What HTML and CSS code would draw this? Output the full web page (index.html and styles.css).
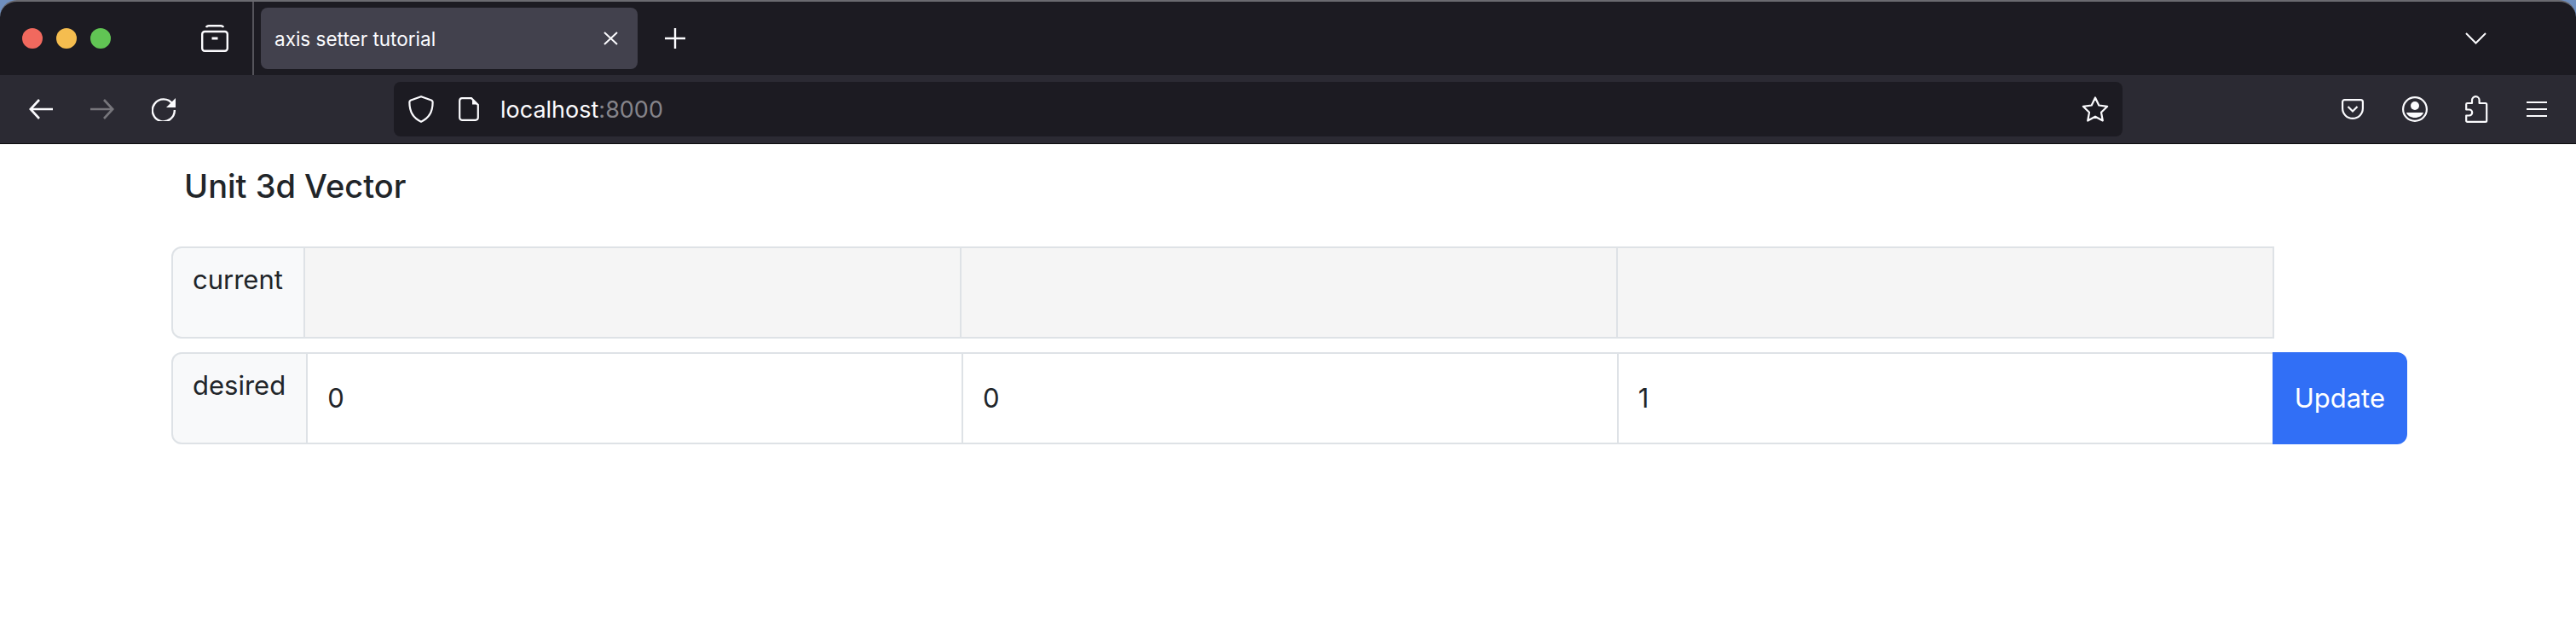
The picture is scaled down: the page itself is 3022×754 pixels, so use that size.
FILE: index.html
```html
<!DOCTYPE html>
<html lang="en">
<head>
    <meta charset="UTF-8">
    <meta name="viewport" content="width=device-width, initial-scale=1.0">
    <title>axis setter tutorial</title>
    <link rel="stylesheet" href="styles.css">
</head>
<body>
    <header class="chrome">
        <div class="titlebar">
            <div class="lights">
                <span class="light red"></span>
                <span class="light yellow"></span>
                <span class="light green"></span>
            </div>
            <svg class="view-icon" width="32" height="32" viewBox="0 0 32 32" fill="none" stroke="#fbfbfe" stroke-width="2.4">
                <path d="M6 3.2C6.5 1.8 7.5 1.3 9 1.3h14c1.500 0 2.500.5 3 1.900"/>
                <rect x="1.200" y="8" width="29.600" height="22.800" rx="3"/>
                <path d="M12.500 16h7" stroke-width="3"/>
            </svg>
            <span class="divider"></span>
            <div class="tab">
                <span class="tab-title">axis setter tutorial</span>
                <svg width="17" height="16" viewBox="0 0 17 16" fill="none" stroke="#fbfbfe" stroke-width="2">
                    <path d="M1 1l15 14M16 1L1 15"/>
                </svg>
            </div>
            <svg class="new-tab" width="24" height="24" viewBox="0 0 24 24" fill="none" stroke="#fbfbfe" stroke-width="2.400">
                <path d="M12 0v24M0 12h24"/>
            </svg>
            <svg class="tab-list" width="25" height="14" viewBox="0 0 25 14" fill="none" stroke="#fbfbfe" stroke-width="2">
                <path d="M1 1l11.500 11.500L24 1"/>
            </svg>
        </div>
        <div class="toolbar">
            <svg class="nav-icon" width="28" height="24" viewBox="0 0 28 24" fill="none" stroke="#fbfbfe" stroke-width="2.600">
                <path d="M28 12H2M12 1L1.800 12 12 23"/>
            </svg>
            <svg class="nav-icon" width="28" height="24" viewBox="0 0 28 24" fill="none" stroke="#77767c" stroke-width="2.600">
                <path d="M0 12h26M16 1l10.200 11L16 23"/>
            </svg>
            <svg class="nav-icon" width="28" height="28" viewBox="0 0 28 28" fill="none" stroke="#fbfbfe" stroke-width="2.400">
                <path d="M24.500 8A13 13 0 1 0 26.800 15"/>
                <path d="M28 1v11H17z" fill="#fbfbfe" stroke="none"/>
            </svg>
            <div class="urlbar">
                <svg width="30" height="32" viewBox="0 0 30 32" fill="none" stroke="#fbfbfe" stroke-width="2.200">
                    <path d="M15 1.200L27 5.500c1 .4 1.600 1 1.600 2 .2 9.500-3 18.500-13.600 23.300C4.400 26 1.200 17 1.400 7.500c0-1 .6-1.600 1.600-2z" stroke-linejoin="round"/>
                </svg>
                <svg class="page-icon" width="24" height="28" viewBox="0 0 24 28" fill="none" stroke="#fbfbfe" stroke-width="2.200">
                    <path d="M4 1.200h11l7.800 7.800V24a3 3 0 0 1-3 2.800H4A3 3 0 0 1 1.200 24V4A3 3 0 0 1 4 1.200z"/>
                    <path d="M16 2v6.500h6.500z" fill="#fbfbfe" stroke="none"/>
                </svg>
                <span class="host">localhost<span class="port">:8000</span></span>
                <svg class="star" width="32" height="30" viewBox="0 0 32 30" fill="none" stroke="#fbfbfe" stroke-width="2.200" stroke-linejoin="round">
                    <path d="M16 1.500l4.300 9 9.900 1.300-7.200 6.900 1.800 9.800-8.800-4.800-8.800 4.800L9 18.700 1.800 11.800l9.900-1.300z"/>
                </svg>
            </div>
            <svg class="pocket" width="26" height="24" viewBox="0 0 26 24" fill="none" stroke="#fbfbfe" stroke-width="2.200">
                <path d="M3.500 1.100h19c1.300 0 2.400 1 2.400 2.400V11c0 6.600-5.300 11.900-11.900 11.900S1.100 17.600 1.100 11V3.500c0-1.400 1.100-2.400 2.400-2.400z"/>
                <path d="M7.500 9l5.500 5.500L18.500 9"/>
            </svg>
            <svg class="account" width="30" height="30" viewBox="0 0 30 30" fill="none" stroke="#fbfbfe" stroke-width="2.200">
                <circle cx="15" cy="15" r="13.900"/>
                <circle cx="15" cy="11" r="5" fill="#fbfbfe" stroke="none"/>
                <path d="M5 19h20c-1 3.800-5.500 6-10 6s-9-2.200-10-6z" fill="#fbfbfe" stroke="none"/>
            </svg>
            <svg class="extensions" width="27" height="32" viewBox="0 0 27 32" fill="none" stroke="#fbfbfe" stroke-width="2.200" stroke-linejoin="round">
                <path d="M2.500 9H8V5.500a4.300 4.300 0 0 1 8.600 0V9h7.200c.8 0 1.400.6 1.400 1.400v19.100c0 .8-.6 1.400-1.400 1.400H2.500c-.7 0-1.300-.6-1.300-1.300v-6.100h3.500c2 0 3.500-1.600 3.500-3.500s-1.500-3.500-3.500-3.500H1.200v-6.200C1.200 9.600 1.800 9 2.500 9z"/>
            </svg>
            <svg class="menu" width="24" height="20" viewBox="0 0 24 20" fill="none" stroke="#fbfbfe" stroke-width="2.200">
                <path d="M0 2h24M0 10h24M0 18h24"/>
            </svg>
        </div>
    </header>

    <main class="page">
        <h5 class="heading">Unit 3d Vector</h5>
        <div class="vector-row current-row">
            <span class="row-label">current</span>
            <div class="field readonly"></div>
            <div class="field readonly"></div>
            <div class="field readonly"></div>
        </div>
        <div class="vector-row">
            <span class="row-label">desired</span>
            <input class="field" type="text" value="0">
            <input class="field" type="text" value="0">
            <input class="field" type="text" value="1">
            <button class="update-btn">Update</button>
        </div>
    </main>
</body>
</html>
```

FILE: styles.css
```css
html, body {
    margin: 0;
    height: 100%;
}
body {
    background-color: #fff;
    font-family: Inter, "Liberation Sans", sans-serif;
    color: #212529;
    overflow: hidden;
}
.chrome {
    background-color: #6f8fbf;
}
.titlebar {
    height: 86px;
    border-top: 2px solid #6a6a70;
    border-radius: 20px 20px 0 0;
    background-color: #1c1b22;
    display: flex;
    align-items: center;
    padding-left: 26px;
    padding-right: 105px;
}
.lights {
    display: flex;
    gap: 16px;
}
.light {
    width: 24px;
    height: 24px;
    border-radius: 50%;
}
.red { background-color: #f1695e; }
.yellow { background-color: #f5bd4f; }
.green { background-color: #61c554; }
.view-icon {
    margin-left: 106px;
}
.divider {
    width: 2px;
    height: 86px;
    margin-left: 28px;
    background-color: #55545b;
}
.tab {
    width: 442px;
    height: 72px;
    margin-left: 8px;
    padding: 0 23px 0 16px;
    box-sizing: border-box;
    border-radius: 8px;
    background-color: #42414d;
    display: flex;
    align-items: center;
    justify-content: space-between;
    color: #fbfbfe;
    font-size: 22.5px;
}
.new-tab {
    margin-left: 32px;
}
.tab-list {
    margin-left: auto;
}
.toolbar {
    height: 80px;
    border-bottom: 1px solid #0c0c0d;
    background-color: #2b2a33;
    display: flex;
    align-items: center;
    padding-left: 34px;
}
.nav-icon {
    margin-right: 44px;
}
.urlbar {
    width: 2028px;
    height: 64px;
    margin-left: 212px;
    padding: 0 16px 0 17px;
    box-sizing: border-box;
    border-radius: 8px;
    background-color: #1c1b22;
    display: flex;
    align-items: center;
    color: #fbfbfe;
    font-size: 27px;
}
.page-icon {
    margin-left: 29px;
}
.host {
    margin-left: 25px;
}
.port {
    color: #85848a;
}
.star {
    margin-left: auto;
}
.pocket {
    margin-left: 257px;
}
.account {
    margin-left: 45px;
}
.extensions {
    margin-left: 44px;
}
.menu {
    margin-left: 45px;
}
.page {
    padding: 25px 198px 0 201px;
}
.heading {
    margin: 0 0 47px 15px;
    font-size: 38px;
    font-weight: 500;
    line-height: 48px;
}
.vector-row {
    display: flex;
    height: 108px;
    margin-bottom: 16px;
}
.current-row {
    margin-right: 156px;
}
.row-label {
    padding: 13px 24px 11px 23px;
    border: 2px solid #dee2e6;
    border-radius: 12px 0 0 12px;
    background-color: #f8f9fa;
    font-size: 31px;
    line-height: 48px;
}
.field {
    flex: 1;
    min-width: 0;
    margin-left: -2px;
    padding: 12px 24px 12px 23px;
    border: 2px solid #dee2e6;
    background-color: #fff;
    color: #212529;
    font-family: inherit;
    font-size: 31px;
    line-height: 48px;
    outline: none;
}
.readonly {
    background-color: #f5f5f5;
}
.update-btn {
    margin-left: -2px;
    padding: 12px 26px;
    border: 0;
    border-radius: 0 12px 12px 0;
    background-color: #316ff6;
    color: #fff;
    font-family: inherit;
    font-size: 31px;
    line-height: 48px;
}
```
